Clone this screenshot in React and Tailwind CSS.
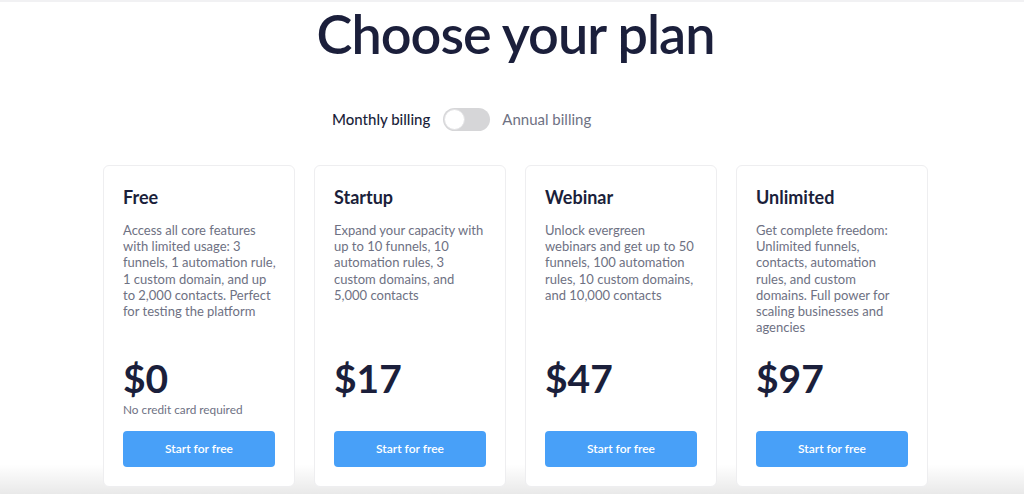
import React, { useState } from "react";

export default function App() {
  const [annual, setAnnual] = useState(false);
  const plans = [
    {
      name: "Free",
      lines: [
        "Access all core features",
        "with limited usage: 3",
        "funnels, 1 automation rule,",
        "1 custom domain, and up",
        "to 2,000 contacts. Perfect",
        "for testing the platform",
      ],
      price: "$0",
      note: "No credit card required",
    },
    {
      name: "Startup",
      lines: [
        "Expand your capacity with",
        "up to 10 funnels, 10",
        "automation rules, 3",
        "custom domains, and",
        "5,000 contacts",
      ],
      price: "$17",
    },
    {
      name: "Webinar",
      lines: [
        "Unlock evergreen",
        "webinars and get up to 50",
        "funnels, 100 automation",
        "rules, 10 custom domains,",
        "and 10,000 contacts",
      ],
      price: "$47",
    },
    {
      name: "Unlimited",
      lines: [
        "Get complete freedom:",
        "Unlimited funnels,",
        "contacts, automation",
        "rules, and custom",
        "domains. Full power for",
        "scaling businesses and",
        "agencies",
      ],
      price: "$97",
    },
  ];

  return (
    <div className="w-[1024px] h-[494px] overflow-hidden bg-white font-['Lato',sans-serif] text-[#1b1f3b]">
      <div className="h-[2px] bg-[#f1f1f3]" />
      <div className="flex flex-col items-center pl-[7px] bg-gradient-to-b from-white from-[94%] to-[#e9e9e9]">
        <h1 className="mt-[2px] text-[54px] leading-[60px] font-semibold tracking-[-1px]">
          Choose your plan
        </h1>
        <div className="mt-[44px] self-start ml-[325px] flex items-center text-[15px]">
          <span className="text-[#1b1f3b] font-medium">Monthly billing</span>
          <button
            onClick={() => setAnnual(!annual)}
            className="ml-[13px] w-[47px] h-[23px] rounded-full bg-[#d6d6d8] p-[1px] flex"
          >
            <span
              className={`w-[21px] h-[21px] rounded-full bg-white border border-[#e2e2e4] ${
                annual ? "ml-auto" : ""
              }`}
            />
          </button>
          <span className="ml-[12px] text-[#6e7183]">Annual billing</span>
        </div>
        <div className="mt-[34px] flex gap-[19px] pb-[7px]">
          {plans.map((plan) => (
            <div
              key={plan.name}
              className="w-[192px] h-[322px] rounded-[6px] border border-[#eeeef0] bg-white px-[19px] pt-[19px] flex flex-col"
            >
              <h2 className="text-[18px] leading-[24px] font-bold">{plan.name}</h2>
              <p className="mt-[13px] text-[13px] leading-[16.2px] text-[#6e7183]">
                {plan.lines.map((line, i) => (
                  <span key={i} className="block whitespace-nowrap">
                    {line}
                  </span>
                ))}
              </p>
              <div className="mt-auto">
                <div className="text-[39px] leading-[44px] font-bold">{plan.price}</div>
                <div className="h-[22px] text-[11.8px] leading-[20px] text-[#6e7183]">
                  {plan.note}
                </div>
              </div>
              <button className="mt-[9px] mb-[19px] h-[36px] w-[152px] rounded-[4px] bg-[#48a0f8] text-white text-[12px] font-semibold">
                Start for free
              </button>
            </div>
          ))}
        </div>
      </div>
    </div>
  );
}
